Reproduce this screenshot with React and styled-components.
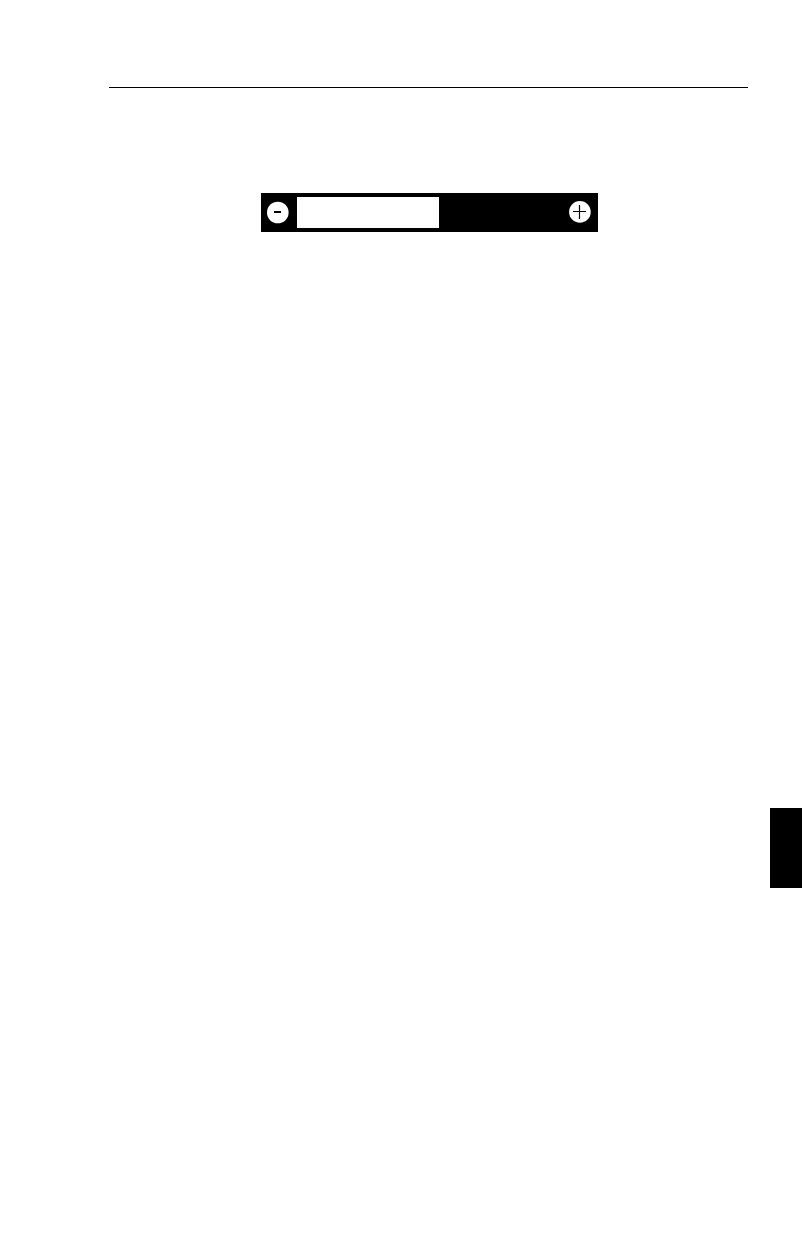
import React, { useState } from "react";
import styled, { createGlobalStyle } from "styled-components";

const GlobalStyle = createGlobalStyle`
  *, *::before, *::after { box-sizing: border-box; }
  body {
    margin: 0;
    background: #fff;
    color: #000;
    font-family: "Liberation Sans", Arial, sans-serif;
  }
`;

const Page = styled.div`
  display: flex;
  min-height: 100vh;
`;

const Content = styled.main`
  flex: 1;
  min-width: 0;
  padding: 87px 22px 0 109px;
`;

const Rule = styled.hr`
  height: 1px;
  margin: 0 0 105px;
  border: 0;
  background: #000;
`;

const Figure = styled.section`
  display: flex;
  justify-content: center;
  padding-left: 2px;
`;

const ControlBar = styled.div`
  display: flex;
  align-items: center;
  gap: 8px;
  width: 337px;
  height: 39px;
  padding: 0 7px 0 6px;
  background: #000;
`;

const RoundButton = styled.button`
  flex: none;
  display: block;
  width: 22px;
  height: 23px;
  padding: 0;
  border: 0;
  background: none;
  cursor: pointer;
`;

const Icon = styled.svg`
  display: block;
  width: 22px;
  height: 23px;
`;

const Level = styled.input`
  flex: 1;
  min-width: 0;
  height: 31px;
  margin: 0;
  appearance: none;
  cursor: pointer;
  background: linear-gradient(#fff, #fff) left / var(--level) 100% no-repeat #000;

  &::-webkit-slider-thumb {
    appearance: none;
    width: 1px;
    height: 31px;
    background: transparent;
  }

  &::-moz-range-thumb {
    width: 1px;
    height: 31px;
    border: 0;
    background: transparent;
  }
`;

const Side = styled.aside`
  flex: none;
  width: 32px;
  padding-top: 808px;
`;

const ThumbTab = styled.div`
  height: 80px;
  background: #000;
`;

const MAX = 264;
const STEP = 12;

export default function App() {
  const [level, setLevel] = useState(142);
  const change = (delta) =>
    setLevel((value) => Math.min(MAX, Math.max(0, value + delta)));

  return (
    <>
      <GlobalStyle />
      <Page>
        <Content>
          <Rule />
          <Figure>
            <ControlBar>
              <RoundButton type="button" aria-label="Decrease" onClick={() => change(-STEP)}>
                <Icon viewBox="0 0 22 23" aria-hidden="true">
                  <circle cx="10.8" cy="11.5" r="10.8" fill="#fff" />
                  <path d="M7 10h7v2H7z" fill="#000" />
                </Icon>
              </RoundButton>
              <Level
                type="range"
                aria-label="Level"
                min="0"
                max={MAX}
                value={level}
                onChange={(event) => setLevel(Number(event.target.value))}
                style={{ "--level": `${(level / MAX) * 100}%` }}
              />
              <RoundButton type="button" aria-label="Increase" onClick={() => change(STEP)}>
                <Icon viewBox="0 0 22 23" aria-hidden="true">
                  <circle cx="10.9" cy="10.9" r="10.8" fill="#fff" />
                  <path d="M10.5 4v14M4 10.5h13" fill="none" stroke="#000" strokeWidth="1.2" />
                </Icon>
              </RoundButton>
            </ControlBar>
          </Figure>
        </Content>
        <Side>
          <ThumbTab />
        </Side>
      </Page>
    </>
  );
}
